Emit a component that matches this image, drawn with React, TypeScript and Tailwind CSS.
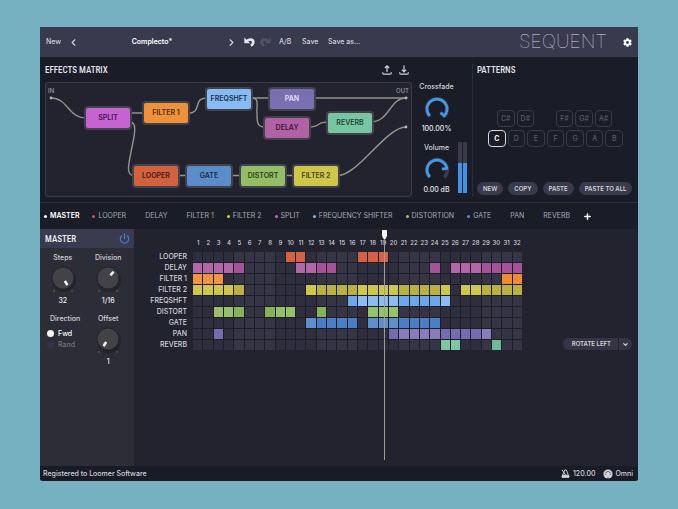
import React, { useState } from 'react';
import { clsx } from 'clsx';
import { ChevronDown, ChevronLeft, ChevronRight, Plus, Power } from 'lucide-react';
import { FaCog } from 'react-icons/fa';

const condensed = "font-['Liberation_Sans_Narrow','Roboto_Condensed','DejaVu_Sans_Condensed',sans-serif]";

interface Track {
  name: string;
  even: string;
  odd: string;
  steps: number[];
}

const range = (from: number, to: number) =>
  Array.from({ length: to - from + 1 }, (_, i) => from + i);

const STEPS = range(1, 32);

const TRACKS: Track[] = [
  { name: 'LOOPER', even: 'bg-[#d4613f]', odd: 'bg-[#cf5634]', steps: [10, 11, ...range(17, 19)] },
  { name: 'DELAY', even: 'bg-[#b268a7]', odd: 'bg-[#a55399]', steps: [...range(1, 5), ...range(11, 14), 24, ...range(26, 32)] },
  { name: 'FILTER 1', even: 'bg-[#f3953f]', odd: 'bg-[#f18b30]', steps: [1, 2, 3, 31, 32] },
  { name: 'FILTER 2', even: 'bg-[#cec749]', odd: 'bg-[#b9b241]', steps: [...range(1, 5), ...range(12, 25), ...range(27, 32)] },
  { name: 'FREQSHFT', even: 'bg-[#8dbcf2]', odd: 'bg-[#6ba8ea]', steps: range(16, 25) },
  { name: 'DISTORT', even: 'bg-[#97c069]', odd: 'bg-[#86b355]', steps: [3, 4, 5, 8, 9, 10, 13, 18, 19, 20] },
  { name: 'GATE', even: 'bg-[#5f8fcb]', odd: 'bg-[#4a80c3]', steps: [...range(12, 16), ...range(18, 24)] },
  { name: 'PAN', even: 'bg-[#766bae]', odd: 'bg-[#877db8]', steps: [3, ...range(20, 29)] },
  { name: 'REVERB', even: 'bg-[#7cc6a5]', odd: 'bg-[#6cba98]', steps: [25, 26, 30] },
];

const NODES = [
  { name: 'SPLIT', className: 'left-[40px] top-[25px] bg-[#c563d3] text-[#3f1747]' },
  { name: 'FILTER 1', className: 'left-[98px] top-[20px] bg-[#ee9138] text-[#4d2c10]' },
  { name: 'FREQSHFT', className: 'left-[161px] top-[6px] bg-[#86bbf3] text-[#1c3150]' },
  { name: 'PAN', className: 'left-[224px] top-[6px] bg-[#7b6fb4] text-[#e6e2f6]' },
  { name: 'DELAY', className: 'left-[219px] top-[35px] bg-[#b062a4] text-[#3d1839]' },
  { name: 'REVERB', className: 'left-[282px] top-[30px] bg-[#78c5a4] text-[#1d4636]' },
  { name: 'LOOPER', className: 'left-[88px] top-[83px] bg-[#d2613f] text-[#47180f]' },
  { name: 'GATE', className: 'left-[141px] top-[83px] bg-[#5b8dca] text-[#182d4b]' },
  { name: 'DISTORT', className: 'left-[195px] top-[83px] bg-[#93be65] text-[#2d4119]' },
  { name: 'FILTER 2', className: 'left-[248px] top-[83px] bg-[#cfc749] text-[#454113]' },
];

const TABS = [
  { name: 'MASTER', dot: 'bg-white' },
  { name: 'LOOPER', dot: 'bg-[#d4513a]' },
  { name: 'DELAY', dot: 'bg-transparent' },
  { name: 'FILTER 1', dot: 'bg-transparent' },
  { name: 'FILTER 2', dot: 'bg-[#d8cf3c]' },
  { name: 'SPLIT', dot: 'bg-[#c65fd6]' },
  { name: 'FREQUENCY SHIFTER', dot: 'bg-[#7db6f2]' },
  { name: 'DISTORTION', dot: 'bg-[#93c455]' },
  { name: 'GATE', dot: 'bg-[#4f8ad6]' },
  { name: 'PAN', dot: 'bg-transparent' },
  { name: 'REVERB', dot: 'bg-transparent' },
];

const UndoArrow: React.FC = () => (
  <svg width="11" height="10" viewBox="0 0 11 10" fill="none">
    <path d="M3 4 C5.600 1.600 9.400 2.400 9.300 5.200 C9.200 6.800 8.300 8 6.800 8.600" stroke="currentColor" strokeWidth="2.600" />
    <path d="M0.300 0.400 V6.200 H6.100 Z" fill="currentColor" />
  </svg>
);

const Header: React.FC = () => (
  <header className="flex h-[30px] items-center bg-[#3a3a4e] px-[6px]">
    <button className="w-[22px] text-left">New</button>
    <button aria-label="Previous preset" className="w-[10px]">
      <ChevronLeft size={11} strokeWidth={2.5} />
    </button>
    <button className="w-[148px] text-center font-semibold text-white">Complecto*</button>
    <button aria-label="Next preset" className="w-[18px]">
      <ChevronRight size={11} strokeWidth={2.5} />
    </button>
    <button aria-label="Undo" className="w-[16px] text-[#e4e4ea]">
      <UndoArrow />
    </button>
    <button aria-label="Redo" className="mr-2 -scale-x-100 text-[#525264]">
      <UndoArrow />
    </button>
    <button className="w-[23px] text-left">A/B</button>
    <button className="w-[26px] text-left">Save</button>
    <button>Save as...</button>
    <span className="ml-auto font-['Inter',sans-serif] text-[19px] leading-5 font-thin text-[#d6d6e0]">SEQUENT</span>
    <button aria-label="Settings" className="ml-4 text-white">
      <FaCog size={9} />
    </button>
  </header>
);

const TrayIcon: React.FC<{ down?: boolean }> = ({ down = false }) => (
  <svg width="10" height="10" viewBox="0 0 10 10" fill="none" stroke="currentColor" strokeWidth="1.200">
    <path d="M0.700 7.200 V8 Q0.700 9.200 1.900 9.200 H8.100 Q9.300 9.200 9.300 8 V7.200" />
    <path d={down ? 'M5 0.5 V6.6 M2.9 4.6 L5 6.8 L7.1 4.6' : 'M5 7 V1 M2.9 3 L5 0.8 L7.1 3'} />
  </svg>
);

const Matrix: React.FC = () => (
  <div className="flex-1 pl-[5px]">
    <div className="flex h-[25px] items-center justify-between">
      <h2 className={clsx('text-[9px] leading-3 font-medium text-[#e2e2e8]', condensed)}>EFFECTS MATRIX</h2>
      <div className="flex gap-[7px] pr-[3px]">
        <button aria-label="Export"><TrayIcon /></button>
        <button aria-label="Import"><TrayIcon down /></button>
      </div>
    </div>
    <div className="relative h-[115px] rounded-[3px] border border-[#3c3c48] bg-[#23232f] text-[6px] leading-[8px]">
      <svg width="365" height="113" viewBox="46 83 365 113" fill="none" className="absolute left-0 top-0">
        <g stroke="#93938f" strokeWidth="1.400" strokeLinecap="round">
          <path d="M51 98 C68 98 68 118 86 118" />
          <path d="M130 113 H144" />
          <path d="M130 122 C137 122 135 133 132 147 C129 163 125 175.500 134 175.500" />
          <path d="M188 113 C203 113 192 98 207 98" />
          <path d="M250 98 H270" />
          <path d="M252 98 C260 98 256 106 257 114 C257 124 258 127 265 127" />
          <path d="M313 98 H407" />
          <path d="M308 127 C322 127 315 122 328 122" />
          <path d="M371 122 C389 122 390 98 406 98" />
          <path d="M178 175.500 H188 M232 175.500 H241 M285 175.500 H294" />
          <path d="M338 175.500 C358 175.500 386 127 406 127" />
        </g>
        <g fill="#b4b4b2">
          <circle cx="51" cy="98" r="1.400" />
          <circle cx="406" cy="98" r="1.400" />
          <circle cx="406" cy="127" r="1.400" />
        </g>
      </svg>
      <span className="absolute left-[2px] top-[4px] text-[#9c9ca6]">IN</span>
      <span className="absolute right-[2px] top-[4px] text-[#9c9ca6]">OUT</span>
      {NODES.map((node) => (
        <button
          key={node.name}
          className={clsx(
            'absolute h-[20px] w-[44px] rounded-[2px] text-center text-[7px] font-semibold ring-2 ring-[#42424b]',
            node.className
          )}
        >
          {node.name}
        </button>
      ))}
    </div>
  </div>
);

const ArcDial: React.FC<{ label: string; value: string; percent: number }> = ({ label, value, percent }) => {
  const end = ((135 + percent * 2.7) * Math.PI) / 180;
  const x = 12 + 10 * Math.cos(end);
  const y = 12 + 10 * Math.sin(end);
  const ix = 12 + 5 * Math.cos(end);
  const iy = 12 + 5 * Math.sin(end);

  return (
    <label className="flex flex-col items-center">
      <span className="leading-[10px]">{label}</span>
      <span className="relative mt-[5px] block h-6 w-6">
        <svg width="24" height="24" viewBox="0 0 24 24" fill="none">
          <path d="M4.200 19.800 A11 11 0 1 1 19.800 19.800" stroke="#454552" strokeWidth="2" />
          <path d="M4.900 19.100 A10 10 0 1 1 19.100 19.100" stroke="#3a3a4a" strokeWidth="3" />
          <path
            d={`M4.9 19.1 A10 10 0 1 1 ${x} ${y} L${ix} ${iy}`}
            stroke="#4297e6"
            strokeWidth="2.800"
            strokeLinejoin="round"
          />
        </svg>
        <input type="range" defaultValue={percent} className="absolute inset-0 h-6 w-6 opacity-0" />
      </span>
      <span className="mt-[3px] leading-[10px] text-[#e6e6ec]">{value}</span>
    </label>
  );
};

const Mixer: React.FC = () => (
  <div className="flex w-[60px] items-end pb-[7px] pl-[6px]">
    <div className="flex w-[37px] flex-col items-center gap-[9px]">
      <ArcDial label="Crossfade" value="100.00%" percent={100} />
      <ArcDial label="Volume" value="0.00 dB" percent={80} />
    </div>
    <div className="ml-[3px] flex gap-px pb-[2px]">
      {['left', 'right'].map((side) => (
        <div key={side} className="flex h-[51px] w-1 items-end bg-[#3a3a48]">
          <div className="h-[58%] w-full bg-[#3d94e6]" />
        </div>
      ))}
    </div>
  </div>
);

const Key: React.FC<{ note: string; active?: boolean }> = ({ note, active = false }) => (
  <button
    className={clsx(
      'h-[17px] rounded-[4px] border text-center text-[7px] leading-[8px]',
      active ? 'border-[#d8d8de] font-bold text-white' : 'border-[#3a3b46] font-medium text-[#5a5b66]'
    )}
  >
    {note}
  </button>
);

const Patterns: React.FC = () => (
  <div className="my-[6px] flex w-[166px] flex-col border-l border-[#2b2c37] pl-1">
    <h2 className={clsx('mt-px text-[9px] leading-3 font-medium text-[#e2e2e8]', condensed)}>PATTERNS</h2>
    <div className="mt-[34px] ml-[11px] w-[135px]">
      <div className="grid translate-x-[9px] grid-cols-7 gap-[2px]">
        <Key note="C#" />
        <Key note="D#" />
        <span />
        <Key note="F#" />
        <Key note="G#" />
        <Key note="A#" />
      </div>
      <div className="mt-[3px] grid grid-cols-7 gap-[2px]">
        {['C', 'D', 'E', 'F', 'G', 'A', 'B'].map((note) => (
          <Key key={note} note={note} active={note === 'C'} />
        ))}
      </div>
    </div>
    <div className="mt-auto mb-[1px] flex gap-[5px]">
      {['NEW', 'COPY', 'PASTE', 'PASTE TO ALL'].map((name) => (
        <button key={name} className="h-[13px] rounded-full bg-[#3a3a4c] px-[6px] text-[6px] font-semibold whitespace-nowrap">
          {name}
        </button>
      ))}
    </div>
  </div>
);

const Tabs: React.FC = () => (
  <nav className="flex h-[26px] items-center gap-[13px] bg-[#1a1c28] pl-1">
    {TABS.map((tab, i) => (
      <button
        key={tab.name}
        className={clsx(
          'flex items-center gap-[3px] whitespace-nowrap',
          i === 0 ? 'font-semibold text-white' : 'font-normal text-[#a8a8b2]'
        )}
      >
        <span className={clsx('h-[3px] w-[3px] rounded-full', tab.dot)} />
        {tab.name}
      </button>
    ))}
    <button aria-label="Add effect" className="text-white">
      <Plus size={9} strokeWidth={4} />
    </button>
  </nav>
);

const Knob: React.FC<{ label: string; value: string; angle: number }> = ({ label, value, angle }) => (
  <label className="flex flex-col items-center">
    <span className="leading-[10px]">{label}</span>
    <span className="relative mt-[3px] block h-[28px] w-[30px]">
      <svg width="30" height="28" viewBox="0 0 30 28">
        <circle cx="16" cy="14" r="12" fill="#23232b" />
        <circle cx="15" cy="12" r="11.500" fill="#24242a" />
        <circle cx="15" cy="12" r="10.500" fill="#434347" />
        <circle cx="6" cy="25" r="1" fill="#555560" />
        <circle cx="24" cy="25" r="1" fill="#555560" />
        <rect x="13.700" y="3.500" width="2.600" height="5" rx="0.600" fill="#ededed" transform={`rotate(${angle} 15 12)`} />
      </svg>
      <input type="range" className="absolute inset-0 h-full w-full opacity-0" />
    </span>
    <span className="mt-[2px] leading-[10px] text-[#e6e6ec]">{value}</span>
  </label>
);

const MasterPanel: React.FC = () => {
  const [direction, setDirection] = useState('Fwd');

  return (
    <aside className="w-[94px] shrink-0 bg-[#2d2d38]">
      <div className="flex h-[19px] items-center justify-between bg-[#3a3b4f] pl-[5px] pr-1">
        <h2 className={clsx('text-[9px] leading-3 font-medium text-[#ececf0]', condensed)}>MASTER</h2>
        <button aria-label="Bypass" className="text-[#3f7fd8]">
          <Power size={11} strokeWidth={2.8} />
        </button>
      </div>
      <div className="grid grid-cols-2 gap-y-2 pr-[3px] pt-[5px]">
        <Knob label="Steps" value="32" angle={148} />
        <Knob label="Division" value="1/16" angle={42} />
        <fieldset className="pl-[7px]">
          <legend className="pl-[3px] leading-[10px]">Direction</legend>
          <div className="mt-[4px] flex flex-col">
            {['Fwd', 'Rand'].map((name) => (
              <label
                key={name}
                className={clsx(
                  'flex h-[11px] items-center gap-1',
                  direction === name ? 'text-white' : 'text-[#73737d]'
                )}
              >
                <input
                  type="radio"
                  name="direction"
                  checked={direction === name}
                  onChange={() => setDirection(name)}
                  className="h-[7px] w-[7px] appearance-none rounded-full bg-[#33334a] checked:bg-[#f2f2f2]"
                />
                {name}
              </label>
            ))}
          </div>
        </fieldset>
        <Knob label="Offset" value="1" angle={212} />
      </div>
    </aside>
  );
};

const Sequencer: React.FC = () => (
  <section className="relative flex flex-1 bg-[#23232f]">
    <div className="w-[53px] pt-[23px]">
      <div className="grid h-[98px] grid-rows-9">
        {TRACKS.map((track) => (
          <span key={track.name} className="flex items-center justify-end">
            {track.name}
          </span>
        ))}
      </div>
    </div>
    <div className="ml-[6px] w-[329px]">
      <div className="grid h-[23px] grid-cols-[repeat(32,minmax(0,1fr))] pt-[10px] text-center text-[6px] leading-[8px]">
        {STEPS.map((step) => (
          <span key={step}>{step}</span>
        ))}
      </div>
      <div className="grid h-[98px] grid-cols-[repeat(32,minmax(0,1fr))] grid-rows-9 gap-px bg-[#1d1d27]">
        {TRACKS.map((track) =>
          STEPS.map((step) => {
            const on = track.steps.includes(step);
            const odd = Math.floor((step - 1) / 4) % 2 === 1;
            return (
              <button
                key={`${track.name}-${step}`}
                aria-label={`${track.name} step ${step}`}
                aria-pressed={on}
                className={clsx(on ? (odd ? track.odd : track.even) : odd ? 'bg-[#353546]' : 'bg-[#2e2e3e]')}
              />
            );
          })
        )}
      </div>
    </div>
    {/* Playhead */}
    <div className="absolute top-px bottom-[6px] left-[248px] flex w-[5px] flex-col items-center">
      <svg width="5" height="9" viewBox="0 0 5 9">
        <path d="M0.500 0 H4.500 Q5 0 5 0.500 V6 L3.500 9 H1.500 L0 6 V0.500 Q0 0 0.500 0Z" fill="#f4f4f4" />
      </svg>
      <div className="w-px flex-1 bg-[#9c9b92]" />
    </div>
    <div className="mt-[109px] mr-[6px] ml-auto flex h-3 gap-px self-start text-[6px] font-semibold">
      <button className="rounded-l-full bg-[#343444] pl-[9px] pr-[7px] whitespace-nowrap">ROTATE LEFT</button>
      <button aria-label="More actions" className="rounded-r-full bg-[#343444] px-[3px]">
        <ChevronDown size={7} strokeWidth={4} />
      </button>
    </div>
  </section>
);

const Footer: React.FC = () => (
  <footer className="flex h-[15px] items-center bg-[#191b26] pl-[3px] pr-[5px]">
    <span>Registered to Loomer Software</span>
    <div className="ml-auto flex items-center gap-[3px]">
      <svg width="9" height="9" viewBox="0 0 9 9" fill="none" stroke="#d8d8de" strokeWidth="0.900">
        <path d="M1 8 L3.600 1 H5.400 L8 8 Z M4.600 6 L1 0.800" />
        <path d="M1.500 6.300 H7.500 L8 8.200 H1 Z" fill="#d8d8de" />
      </svg>
      <span>120.00</span>
    </div>
    <div className="ml-[8px] flex items-center gap-[2px]">
      <svg width="10" height="10" viewBox="0 0 10 10">
        <circle cx="5" cy="5" r="4.600" fill="#d2d2d8" />
        <g fill="#3a3b46">
          <circle cx="2.400" cy="5" r="0.600" />
          <circle cx="3.200" cy="3.200" r="0.600" />
          <circle cx="5" cy="2.400" r="0.600" />
          <circle cx="6.800" cy="3.200" r="0.600" />
          <circle cx="7.600" cy="5" r="0.600" />
          <path d="M4 8.800 h2 v0.800 h-2z" />
        </g>
      </svg>
      <span>Omni</span>
    </div>
  </footer>
);

const App: React.FC = () => (
  <div className="flex min-h-screen flex-col bg-[#75b1c0] px-10 pt-[27px] pb-7">
    <main className="flex flex-1 flex-col overflow-hidden rounded-b-[3px] bg-[#1a1c28] font-['Inter',sans-serif] text-[7px] leading-[10px] font-medium text-[#d2d2da]">
      <Header />
      <section className="flex h-[146px] border-b border-[#2d2d39]">
        <Matrix />
        <Mixer />
        <Patterns />
      </section>
      <Tabs />
      <div className="flex flex-1">
        <MasterPanel />
        <Sequencer />
      </div>
      <Footer />
    </main>
  </div>
);

export default App;
